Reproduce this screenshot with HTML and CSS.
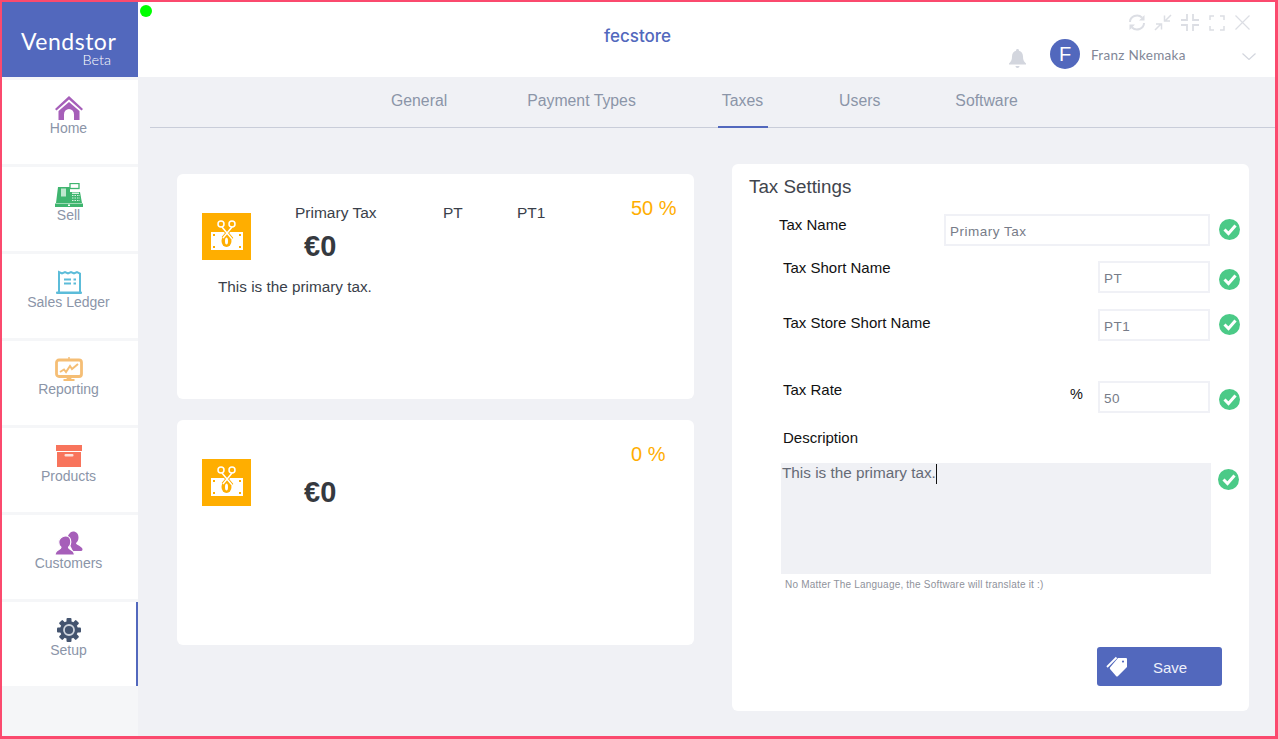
FILE: index.html
```html
<!DOCTYPE html>
<html lang="en">
<head>
    <meta charset="UTF-8">
    <meta name="viewport" content="width=device-width, initial-scale=1.0">
    <title>Vendstor - Setup</title>
    <link rel="stylesheet" href="styles.css">
</head>
<body>
<div class="window">
    <span class="status-dot"></span>

    <aside class="sidebar">
        <div class="logo">
            <div class="logo-name">Vendstor</div>
            <div class="logo-beta">Beta</div>
        </div>
        <nav class="nav">
            <a class="nav-item">
                <svg class="nav-icon" viewBox="0 0 28 24"><path fill="#a65fb9" d="M14 0 L0 13 L1.500 14.500 L14 3.500 L26.500 14.500 L28 13 Z"/><path fill="#a65fb9" d="M3.500 15 L14 6 L24.500 15 V24 H19 V18.500 a5 5.500 0 0 0 -10 0 V24 H3.500 Z"/></svg>
                <span>Home</span>
            </a>
            <a class="nav-item">
                <svg class="nav-icon" viewBox="0 0 28 24">
                    <rect x="15" y="0.500" width="9" height="5" fill="none" stroke="#3fb56f" stroke-width="1.300"/>
                    <path fill="#3fb56f" d="M3 4 H15 V20 H1 Z"/>
                    <rect x="6" y="5.500" width="5" height="8" fill="#bfe8cf"/>
                    <path fill="#3fb56f" d="M15 9 H25 L27 20 H15 Z"/>
                    <path stroke="#d6f2e1" stroke-width="1" stroke-dasharray="1.500 1" d="M17 12.500 H25 M17 15 H25 M17 17.500 H25"/>
                    <rect x="17" y="9.500" width="7" height="1.500" fill="#d6f2e1"/>
                    <rect x="0" y="20.500" width="28" height="3.500" fill="#3fb56f"/>
                    <rect x="13" y="21.500" width="2" height="1.500" fill="#fff"/>
                </svg>
                <span>Sell</span>
            </a>
            <a class="nav-item">
                <svg class="nav-icon" viewBox="0 0 28 24">
                    <path fill="none" stroke="#5cbcd9" stroke-width="2" d="M4 22 V2 L7 3.500 L10 2 L13 3.500 L16 2 L19 3.500 L22 2 L25 3.500 V22"/>
                    <rect x="1" y="21.500" width="26" height="2.500" rx="1" fill="#5cbcd9"/>
                    <path stroke="#5cbcd9" stroke-width="2" d="M9 9.500 H16 M9 13.500 H16 M18.500 9.500 H21 M18.500 13.500 H21"/>
                </svg>
                <span>Sales Ledger</span>
            </a>
            <a class="nav-item">
                <svg class="nav-icon" viewBox="0 0 28 24">
                    <rect x="1.500" y="3" width="25" height="16.500" rx="2.500" fill="none" stroke="#f5be75" stroke-width="2.800"/>
                    <path fill="#f5be75" d="M13.300 0 h1.400 v3 h-1.400 Z M12 20 h4 l.5 2 h3 v2 h-11 v-2 h3 Z"/>
                    <path fill="none" stroke="#f5be75" stroke-width="2" d="M5 15 L9 12.500 L11 15 L15 9 L17 12 L23 7"/>
                </svg>
                <span>Reporting</span>
            </a>
            <a class="nav-item">
                <svg class="nav-icon" viewBox="0 0 28 24">
                    <rect x="1" y="1" width="26" height="6" fill="#f8745c"/>
                    <rect x="2" y="8" width="24" height="15" fill="#f8745c"/>
                    <rect x="9.500" y="10" width="9" height="2.500" rx="1" fill="#fde0da"/>
                </svg>
                <span>Products</span>
            </a>
            <a class="nav-item">
                <svg class="nav-icon" viewBox="0 0 28 24">
                    <path fill="#a65fb9" d="M18 0.500 c3.500 0 5.500 2.500 5.500 6 c0 2.500 -1 4.500 -2.500 5.500 c0 2 4 2.500 6 5 c1 1.500 .5 3 -1 3 h-8 l-6 -12 c.8 -4 3.500 -7.500 6 -7.500 Z"/>
                    <path fill="#a65fb9" stroke="#fff" stroke-width="1.200" d="M10.500 5 c3.300 0 5.300 2.500 5.300 6 c0 2.500 -1 4.300 -2.300 5.300 c0 2 3.500 2.500 5 4.500 c.8 1.200 1 2 1 3.200 H0 c0 -1.200 .2 -2 1 -3.200 c1.500 -2 5 -2.500 5 -4.500 c-1.300 -1 -2.300 -2.800 -2.300 -5.300 c0 -3.500 3.500 -6 6.800 -6 Z"/>
                </svg>
                <span>Customers</span>
            </a>
            <a class="nav-item nav-item-active">
                <svg class="nav-icon" viewBox="0 0 28 24">
                    <g fill="#44546f">
                        <rect x="11.500" y="0" width="5" height="24" rx="1"/>
                        <rect x="11.500" y="0" width="5" height="24" rx="1" transform="rotate(45 14 12)"/>
                        <rect x="11.500" y="0" width="5" height="24" rx="1" transform="rotate(90 14 12)"/>
                        <rect x="11.500" y="0" width="5" height="24" rx="1" transform="rotate(135 14 12)"/>
                        <circle cx="14" cy="12" r="9"/>
                    </g>
                    <circle cx="14" cy="12" r="5" fill="none" stroke="#cfd5de" stroke-width="1.800"/>
                </svg>
                <span>Setup</span>
            </a>
        </nav>
    </aside>

    <div class="main">
        <header class="header">
            <div class="app-title">fecstore</div>
            <div class="header-right">
                <div class="win-controls">
                    <svg class="win-icon win-refresh" viewBox="0 0 18 17"><path fill="none" stroke="#dcdee4" stroke-width="2" d="M2 8 a7 6.500 0 0 1 12 -4.500 M16 9 a7 6.500 0 0 1 -12 4.500"/><path fill="#dcdee4" d="M16.500 1 V6.500 H11 Z M1.500 16 V10.500 H7 Z"/></svg>
                    <svg class="win-icon win-collapse" viewBox="0 0 18 17"><path fill="none" stroke="#dcdee4" stroke-width="1.500" d="M1 16 L7 10 M2 10 H7.500 V15.500 M17 1 L11 7 M10.500 1.500 V7 H16"/></svg>
                    <svg class="win-icon win-shrink" viewBox="0 0 18 17"><path fill="none" stroke="#dcdee4" stroke-width="1.800" d="M6 0 V6 H0 M12 0 V6 H18 M6 17 V11 H0 M12 17 V11 H18"/></svg>
                    <svg class="win-icon win-expand" viewBox="0 0 16 16"><path fill="none" stroke="#dcdee4" stroke-width="1.500" d="M1 5 V1 H5 M11 1 H15 V5 M1 11 V15 H5 M11 15 H15 V11"/></svg>
                    <svg class="win-icon win-close" viewBox="0 0 15 15"><path fill="none" stroke="#dcdee4" stroke-width="1.200" d="M0.500 0.500 L14.500 14.500 M14.500 0.500 L0.500 14.500"/></svg>
                </div>
                <div class="user-row">
                    <svg class="bell" viewBox="0 0 17 19"><path fill="#d3d6de" d="M8.500 0 c1 0 1.500 .7 1.500 1.700 c2.500 .7 4 2.800 4 5.800 c0 3.500 .8 5 3 7 v1 H0 v-1 c2.200 -2 3 -3.500 3 -7 c0 -3 1.500 -5.100 4 -5.800 C7 .7 7.500 0 8.500 0 Z M6.500 17 h4 c0 1.200 -.9 2 -2 2 s-2 -.8 -2 -2 Z"/></svg>
                    <div class="avatar">F</div>
                    <div class="user-name">Franz Nkemaka</div>
                    <svg class="chevron" viewBox="0 0 14 7"><path fill="none" stroke="#d3d6de" stroke-width="1.200" d="M0.500 0.500 L7 6.500 L13.500 0.500"/></svg>
                </div>
            </div>
        </header>

        <div class="tabs">
            <a class="tab">General</a>
            <a class="tab">Payment Types</a>
            <a class="tab tab-active">Taxes</a>
            <a class="tab">Users</a>
            <a class="tab">Software</a>
        </div>

        <div class="content">
            <div class="tax-list">
                <div class="tax-card">
                    <div class="tax-top">
                        <svg class="tax-tile" viewBox="0 0 49 47">
                            <rect width="49" height="47" fill="#ffae00"/>
                            <rect x="9" y="19" width="32" height="18" fill="#fff"/>
                            <ellipse cx="24.500" cy="28" rx="5" ry="6" fill="#ffae00"/>
                            <ellipse cx="24.500" cy="28" rx="1.500" ry="3.500" fill="#fff"/>
                            <path fill="#ffae00" d="M11 21 h2 v2 h-2 Z M37 21 h2 v2 h-2 Z M11 33 h2 v2 h-2 Z M37 33 h2 v2 h-2 Z"/>
                            <path fill="none" stroke="#ffae00" stroke-width="3.500" d="M20 14 L30 26 M30 14 L21 25"/>
                            <path fill="none" stroke="#fff" stroke-width="1.500" d="M20 14 L30 26 M30 14 L21 25"/>
                            <circle cx="19" cy="11" r="3" fill="none" stroke="#fff" stroke-width="1.500"/>
                            <circle cx="30" cy="11" r="3" fill="none" stroke="#fff" stroke-width="1.500"/>
                        </svg>
                        <div class="tax-info">
                            <div class="tax-names">
                                <span class="tax-name">Primary Tax</span>
                                <span class="tax-short">PT</span>
                                <span class="tax-store">PT1</span>
                                <span class="tax-rate">50 %</span>
                            </div>
                            <div class="tax-amount">€0</div>
                        </div>
                    </div>
                    <p class="tax-desc">This is the primary tax.</p>
                </div>
                <div class="tax-card">
                    <div class="tax-top">
                        <svg class="tax-tile" viewBox="0 0 49 47">
                            <rect width="49" height="47" fill="#ffae00"/>
                            <rect x="9" y="19" width="32" height="18" fill="#fff"/>
                            <ellipse cx="24.500" cy="28" rx="5" ry="6" fill="#ffae00"/>
                            <ellipse cx="24.500" cy="28" rx="1.500" ry="3.500" fill="#fff"/>
                            <path fill="#ffae00" d="M11 21 h2 v2 h-2 Z M37 21 h2 v2 h-2 Z M11 33 h2 v2 h-2 Z M37 33 h2 v2 h-2 Z"/>
                            <path fill="none" stroke="#ffae00" stroke-width="3.500" d="M20 14 L30 26 M30 14 L21 25"/>
                            <path fill="none" stroke="#fff" stroke-width="1.500" d="M20 14 L30 26 M30 14 L21 25"/>
                            <circle cx="19" cy="11" r="3" fill="none" stroke="#fff" stroke-width="1.500"/>
                            <circle cx="30" cy="11" r="3" fill="none" stroke="#fff" stroke-width="1.500"/>
                        </svg>
                        <div class="tax-info">
                            <div class="tax-names">
                                <span class="tax-name"></span>
                                <span class="tax-short"></span>
                                <span class="tax-store"></span>
                                <span class="tax-rate">0 %</span>
                            </div>
                            <div class="tax-amount">€0</div>
                        </div>
                    </div>
                </div>
            </div>

            <form class="settings">
                <h2 class="settings-title">Tax Settings</h2>

                <div class="field field-name">
                    <label class="field-label">Tax Name</label>
                    <input class="field-input field-input-wide" type="text" value="Primary Tax">
                    <svg class="check" viewBox="0 0 21 21"><circle cx="10.500" cy="10.500" r="10.500" fill="#4bca87"/><path fill="none" stroke="#fff" stroke-width="3" d="M5.500 10.500 L9.500 14.500 L16.500 6.500"/></svg>
                </div>
                <div class="field field-short">
                    <label class="field-label">Tax Short Name</label>
                    <input class="field-input" type="text" value="PT">
                    <svg class="check" viewBox="0 0 21 21"><circle cx="10.500" cy="10.500" r="10.500" fill="#4bca87"/><path fill="none" stroke="#fff" stroke-width="3" d="M5.500 10.500 L9.500 14.500 L16.500 6.500"/></svg>
                </div>
                <div class="field field-store">
                    <label class="field-label">Tax Store Short Name</label>
                    <input class="field-input" type="text" value="PT1">
                    <svg class="check" viewBox="0 0 21 21"><circle cx="10.500" cy="10.500" r="10.500" fill="#4bca87"/><path fill="none" stroke="#fff" stroke-width="3" d="M5.500 10.500 L9.500 14.500 L16.500 6.500"/></svg>
                </div>
                <div class="field field-rate">
                    <label class="field-label">Tax Rate</label>
                    <span class="field-unit">%</span>
                    <input class="field-input" type="text" value="50">
                    <svg class="check" viewBox="0 0 21 21"><circle cx="10.500" cy="10.500" r="10.500" fill="#4bca87"/><path fill="none" stroke="#fff" stroke-width="3" d="M5.500 10.500 L9.500 14.500 L16.500 6.500"/></svg>
                </div>

                <div class="desc-label">Description</div>
                <div class="desc-row">
                    <div class="desc-box">This is the primary tax.<span class="caret"></span></div>
                    <svg class="check" viewBox="0 0 21 21"><circle cx="10.500" cy="10.500" r="10.500" fill="#4bca87"/><path fill="none" stroke="#fff" stroke-width="3" d="M5.500 10.500 L9.500 14.500 L16.500 6.500"/></svg>
                </div>
                <p class="hint">No Matter The Language, the Software will translate it :)</p>

                <div class="actions">
                    <button class="save" type="button">
                        <svg class="save-icon" viewBox="0 0 22 22"><path fill="#fff" d="M12 2 L20 2 Q21 2 21 3 L21 11 L12 20 Q11 21 10 20 L4 13 Q3.500 12 4 11.500 Z M17 4.500 a1 1 0 1 0 .01 0 Z"/><path fill="none" stroke="#fff" stroke-width="1.800" d="M1 11 L10.500 1.500"/></svg>
                        <span>Save</span>
                    </button>
                </div>
            </form>
        </div>
    </div>
</div>
</body>
</html>
```

FILE: styles.css
```css
* {
    box-sizing: border-box;
}
html, body {
    margin: 0;
    height: 100%;
    overflow: hidden;
}
body {
    font-family: "Liberation Sans", Arial, sans-serif;
    background-color: #f0f1f5;
}
.window {
    position: relative;
    display: flex;
    width: 1278px;
    height: 739px;
    border-style: solid;
    border-color: #fb4a6e;
    border-width: 2px 3px 3px 2px;
    background-color: #f0f1f5;
}
.status-dot {
    position: absolute;
    left: 138px;
    top: 3px;
    width: 12px;
    height: 12px;
    border-radius: 50%;
    background-color: #00ff00;
}

/* sidebar */
.sidebar {
    width: 136px;
    flex-shrink: 0;
    background-color: #f5f6f8;
}
.logo {
    height: 75px;
    padding: 27px 27px 0 19px;
    background-color: #5268bd;
    color: #fff;
}
.logo-name {
    font-family: Lato, sans-serif;
    font-size: 23px;
    line-height: 24px;
    letter-spacing: 0.5px;
    white-space: nowrap;
}
.logo-beta {
    font-family: Lato, sans-serif;
    font-weight: 300;
    font-size: 14.500px;
    line-height: 14px;
    text-align: right;
}
.nav {
    padding-top: 3px;
}
.nav-item {
    display: flex;
    flex-direction: column;
    align-items: center;
    height: 84px;
    margin-bottom: 3px;
    padding: 16px 3px 0 0;
    background-color: #fff;
    color: #8b95a8;
    font-size: 14px;
    line-height: 16px;
}
.nav-item-active {
    border-right: 2px solid #5268bd;
    padding-right: 1px;
    margin-bottom: 0;
}
.nav-icon {
    width: 28px;
    height: 24px;
}

/* header */
.main {
    flex: 1;
    min-width: 0;
}
.header {
    display: flex;
    justify-content: space-between;
    height: 75px;
    background-color: #fff;
}
.app-title {
    margin: 24px 0 0 466px;
    font-family: Inter, sans-serif;
    font-size: 17px;
    font-weight: 500;
    line-height: 20px;
    color: #5268bd;
}
.header-right {
    width: 278px;
    padding: 12px 0 0 12px;
}
.win-controls {
    display: flex;
    justify-content: flex-end;
    align-items: center;
    height: 17px;
    padding-right: 25px;
}
.win-icon {
    height: 17px;
    width: 18px;
}
.win-refresh {
    margin-right: 8px;
}
.win-collapse {
    margin-right: 9px;
}
.win-shrink {
    margin-right: 10px;
}
.win-expand {
    width: 16px;
    height: 16px;
    margin-right: 10px;
}
.win-close {
    width: 15px;
    height: 15px;
}
.user-row {
    display: flex;
    align-items: center;
    height: 30px;
    margin-top: 8px;
}
.bell {
    width: 17px;
    height: 19px;
    margin-top: 8px;
}
.avatar {
    width: 30px;
    height: 30px;
    margin-left: 24px;
    border-radius: 50%;
    background-color: #5268bd;
    color: #fff;
    font-size: 20px;
    line-height: 30px;
    text-align: center;
}
.user-name {
    flex: 1;
    margin-left: 11px;
    font-family: Lato, sans-serif;
    font-size: 13.500px;
    color: #828797;
    letter-spacing: 0.3px;
    padding-top: 2px;
}
.chevron {
    width: 14px;
    height: 7px;
    margin: 5px 19px 0 0;
}

/* tabs */
.tabs {
    display: flex;
    height: 51px;
    margin-left: 12px;
    padding-left: 237px;
    border-bottom: 1px solid #c9cdd9;
}
.tab {
    height: 51px;
    padding: 15px 4px 0;
    font-size: 15.800px;
    line-height: 18px;
    color: #8b95a8;
}
.tab:nth-child(2) {
    margin-left: 72px;
}
.tab:nth-child(3) {
    margin-left: 78px;
}
.tab:nth-child(4) {
    margin-left: 67px;
}
.tab:nth-child(5) {
    margin-left: 67px;
}
.tab-active {
    padding-right: 5px;
    border-bottom: 2px solid #5268bd;
}

/* tax cards */
.content {
    display: flex;
    align-items: flex-start;
    padding-left: 39px;
}
.tax-list {
    width: 517px;
    padding-top: 46px;
}
.tax-card {
    height: 225px;
    margin-bottom: 21px;
    padding-left: 25px;
    border-radius: 6px;
    background-color: #fff;
    color: #3a3f4a;
}
.tax-top {
    display: flex;
    align-items: flex-start;
    height: 90px;
}
.tax-tile {
    width: 49px;
    height: 47px;
    margin-top: 39px;
    flex-shrink: 0;
}
.tax-info {
    margin-left: 44px;
    padding-top: 25px;
}
.tax-names {
    display: flex;
    align-items: center;
    height: 28px;
    font-size: 15.500px;
}
.tax-name {
    width: 148px;
}
.tax-short {
    width: 74px;
}
.tax-store {
    width: 114px;
}
.tax-rate {
    margin-top: -9px;
    font-size: 20px;
    color: #ffae00;
}
.tax-amount {
    margin: 3px 0 0 9px;
    font-size: 29px;
    font-weight: bold;
    line-height: 32px;
    color: #35393f;
}
.tax-desc {
    margin: 13px 0 0 16px;
    font-size: 15.300px;
    line-height: 20px;
}

/* settings form */
.settings {
    width: 517px;
    height: 547px;
    margin: 36px 0 0 38px;
    padding: 12px 9px 0 18px;
    border-radius: 6px;
    background-color: #fff;
}
.settings-title {
    margin: 0 0 16px -1px;
    font-size: 18.800px;
    font-weight: normal;
    line-height: 22px;
    color: #41454d;
}
.field {
    display: flex;
    align-items: flex-start;
    height: 32px;
    padding-left: 33px;
    margin-bottom: 15px;
}
.field-label {
    flex: 1;
    font-size: 15px;
    line-height: 18px;
    color: #111;
}
.field-short .field-label {
    margin-top: -2px;
}
.field-input {
    width: 112px;
    height: 32px;
    padding: 3px 4px 1px;
    border: 2px solid #f0f1f6;
    outline: none;
    font-family: "Liberation Sans", Arial, sans-serif;
    font-size: 13.500px;
    letter-spacing: 0.5px;
    color: #777c88;
}
.field-input-wide {
    width: 266px;
}
.field-unit {
    margin: 4px 15px 0 0;
    font-size: 14.500px;
    line-height: 18px;
    color: #111;
}
.check {
    width: 21px;
    height: 21px;
    margin: 8px 0 0 9px;
    flex-shrink: 0;
}
.field-name {
    padding-left: 29px;
}
.field-name .field-label {
    padding-top: 2px;
}
.field-name .check {
    margin-top: 5px;
}
.field-short {
    margin-bottom: 16px;
}
.field-store {
    margin-bottom: 40px;
}
.field-store .field-label {
    padding-top: 5px;
}
.field-store .check {
    margin-top: 5px;
}
.field-rate {
    margin-bottom: 16px;
}
.desc-label {
    margin: 0 0 16px 33px;
    font-size: 15px;
    line-height: 18px;
    color: #111;
}
.desc-row {
    display: flex;
    align-items: flex-start;
    padding-left: 31px;
}
.desc-box {
    width: 430px;
    height: 111px;
    padding: 1px;
    background-color: #f0f1f5;
    font-size: 15.300px;
    line-height: 18px;
    color: #666b76;
}
.caret {
    display: inline-block;
    width: 1px;
    height: 20px;
    vertical-align: top;
    background-color: #111;
}
.desc-row .check {
    margin: 6px 0 0 7px;
}
.hint {
    margin: 5px 0 0 35px;
    font-size: 10px;
    line-height: 12px;
    letter-spacing: 0.2px;
    color: #8f929b;
}
.actions {
    display: flex;
    justify-content: flex-end;
    margin-top: 56px;
    padding-right: 18px;
}
.save {
    display: flex;
    align-items: center;
    width: 125px;
    height: 39px;
    padding: 0 0 0 9px;
    border: none;
    border-radius: 3px;
    background-color: #5268bd;
    color: #eef0fa;
    font-family: "Liberation Sans", Arial, sans-serif;
    font-size: 15px;
}
.save span {
    padding-top: 2px;
}
.save-icon {
    width: 22px;
    height: 22px;
    margin-right: 25px;
}
```
